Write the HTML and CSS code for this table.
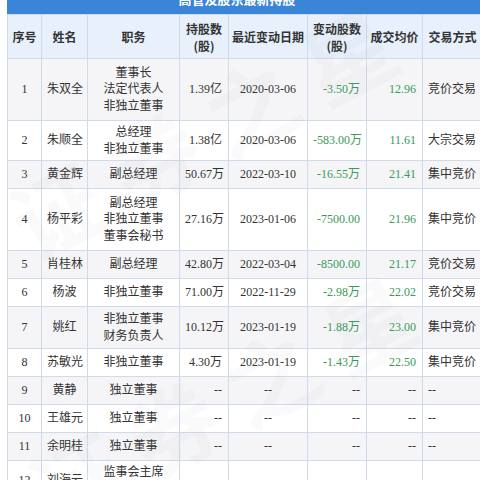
FILE: index.html
```html
<!DOCTYPE html>
<html lang="zh">
<head>
<meta charset="utf-8">
<title>高管持股</title>
<link rel="stylesheet" href="styles.css">
</head>
<body>
<div class="page">
  <div class="title"><span class="title-text">高管及股东最新持股</span></div>
  <table class="grid">
    <colgroup>
      <col class="c-no"><col class="c-name"><col class="c-pos"><col class="c-hold"><col class="c-date"><col class="c-chg"><col class="c-price"><col class="c-way">
    </colgroup>
    <thead>
      <tr class="head">
        <th>序号</th><th>姓名</th><th>职务</th><th>持股数<br>(股)</th><th>最近变动日期</th><th>变动股数<br>(股)</th><th>成交均价</th><th>交易方式</th>
      </tr>
    </thead>
    <tbody>
      <tr class="odd h3"><td class="ctr">1</td><td class="ctr">朱双全</td><td class="ctr">董事长<br>法定代表人<br>非独立董事</td><td class="rt">1.39亿</td><td class="ctr">2020-03-06</td><td class="rt green">-3.50万</td><td class="rt green">12.96</td><td class="lt">竞价交易</td></tr>
      <tr class="even h2"><td class="ctr">2</td><td class="ctr">朱顺全</td><td class="ctr">总经理<br>非独立董事</td><td class="rt">1.38亿</td><td class="ctr">2020-03-06</td><td class="rt green">-583.00万</td><td class="rt green">11.61</td><td class="lt">大宗交易</td></tr>
      <tr class="odd h1"><td class="ctr">3</td><td class="ctr">黄金辉</td><td class="ctr">副总经理</td><td class="rt">50.67万</td><td class="ctr">2022-03-10</td><td class="rt green">-16.55万</td><td class="rt green">21.41</td><td class="lt">集中竞价</td></tr>
      <tr class="even h3"><td class="ctr">4</td><td class="ctr">杨平彩</td><td class="ctr">副总经理<br>非独立董事<br>董事会秘书</td><td class="rt">27.16万</td><td class="ctr">2023-01-06</td><td class="rt green">-7500.00</td><td class="rt green">21.96</td><td class="lt">集中竞价</td></tr>
      <tr class="odd h1"><td class="ctr">5</td><td class="ctr">肖桂林</td><td class="ctr">副总经理</td><td class="rt">42.80万</td><td class="ctr">2022-03-04</td><td class="rt green">-8500.00</td><td class="rt green">21.17</td><td class="lt">竞价交易</td></tr>
      <tr class="even h1"><td class="ctr">6</td><td class="ctr">杨波</td><td class="ctr">非独立董事</td><td class="rt">71.00万</td><td class="ctr">2022-11-29</td><td class="rt green">-2.98万</td><td class="rt green">22.02</td><td class="lt">竞价交易</td></tr>
      <tr class="odd h2b"><td class="ctr">7</td><td class="ctr">姚红</td><td class="ctr">非独立董事<br>财务负责人</td><td class="rt">10.12万</td><td class="ctr">2023-01-19</td><td class="rt green">-1.88万</td><td class="rt green">23.00</td><td class="lt">集中竞价</td></tr>
      <tr class="even h1"><td class="ctr">8</td><td class="ctr">苏敏光</td><td class="ctr">非独立董事</td><td class="rt">4.30万</td><td class="ctr">2023-01-19</td><td class="rt green">-1.43万</td><td class="rt green">22.50</td><td class="lt">集中竞价</td></tr>
      <tr class="odd h1"><td class="ctr">9</td><td class="ctr">黄静</td><td class="ctr">独立董事</td><td class="rt">--</td><td class="ctr">--</td><td class="rt">--</td><td class="rt">--</td><td class="lt">--</td></tr>
      <tr class="even h1"><td class="ctr">10</td><td class="ctr">王雄元</td><td class="ctr">独立董事</td><td class="rt">--</td><td class="ctr">--</td><td class="rt">--</td><td class="rt">--</td><td class="lt">--</td></tr>
      <tr class="odd h1"><td class="ctr">11</td><td class="ctr">余明桂</td><td class="ctr">独立董事</td><td class="rt">--</td><td class="ctr">--</td><td class="rt">--</td><td class="rt">--</td><td class="lt">--</td></tr>
      <tr class="even h2"><td class="ctr">12</td><td class="ctr">刘海云</td><td class="ctr">监事会主席<br>职工代表监事</td><td class="rt">--</td><td class="ctr">--</td><td class="rt">--</td><td class="rt">--</td><td class="lt">--</td></tr>
    </tbody>
  </table>
  <div class="wm wm1">证券之星</div>
  <div class="wm wm2">证券之星</div>
</div>
</body>
</html>
```
FILE: styles.css
```css
html, body {
  margin: 0;
  padding: 0;
  background: #ffffff;
}
.page {
  position: relative;
  width: 480px;
  height: 480px;
  overflow: hidden;
  padding-left: 7px;
  box-sizing: border-box;
  font-family: "Liberation Serif", "Noto Sans CJK SC", serif;
  font-size: 12px;
  color: #333333;
}
.title {
  width: 480px;
  height: 14px;
  overflow: hidden;
  background: #3b85d8;
  text-align: center;
}
.title-text {
  display: block;
  margin-top: -11px;
  line-height: 20px;
  font-family: "Noto Sans CJK SC", sans-serif;
  font-weight: bold;
  font-size: 13px;
  color: #ffffff;
  padding-right: 20px;
}
.grid {
  border-collapse: collapse;
  table-layout: fixed;
  width: 475px;
}
.c-no { width: 34px; }
.c-name { width: 46px; }
.c-pos { width: 92px; }
.c-hold { width: 49px; }
.c-date { width: 79px; }
.c-chg { width: 59px; }
.c-price { width: 56px; }
.c-way { width: 60px; }
.grid th, .grid td {
  border: 1px solid #cfdbea;
  padding: 0 5px;
  line-height: 16.5px;
  vertical-align: middle;
  white-space: nowrap;
  overflow: hidden;
}
.grid th {
  height: 43px;
  background: #e7f0fb;
  font-family: "Noto Sans CJK SC", sans-serif;
  font-weight: bold;
  font-size: 12px;
  color: #333333;
  text-align: center;
  padding: 0 2px;
  line-height: 17px;
}
.odd { background: #f5f5f7; }
.even { background: #ffffff; }
.h1 td { height: 27px; }
.h2 td { height: 39px; }
.h2b td { height: 41px; }
.h3 td { height: 61px; }
.ctr { text-align: center; }
.rt { text-align: right; }
.lt { text-align: left; }
.grid td.rt { padding-right: 6px; }
.green { color: #3a9a5a; }
.wm {
  position: absolute;
  font-family: "Noto Sans CJK SC", sans-serif;
  font-size: 90px;
  font-weight: bold;
  color: rgba(120, 130, 140, 0.04);
  white-space: nowrap;
  transform: rotate(-28deg);
  pointer-events: none;
  letter-spacing: 20px;
}
.wm1 { left: -10px; top: 60px; }
.wm2 { left: 10px; top: 330px; }
```
